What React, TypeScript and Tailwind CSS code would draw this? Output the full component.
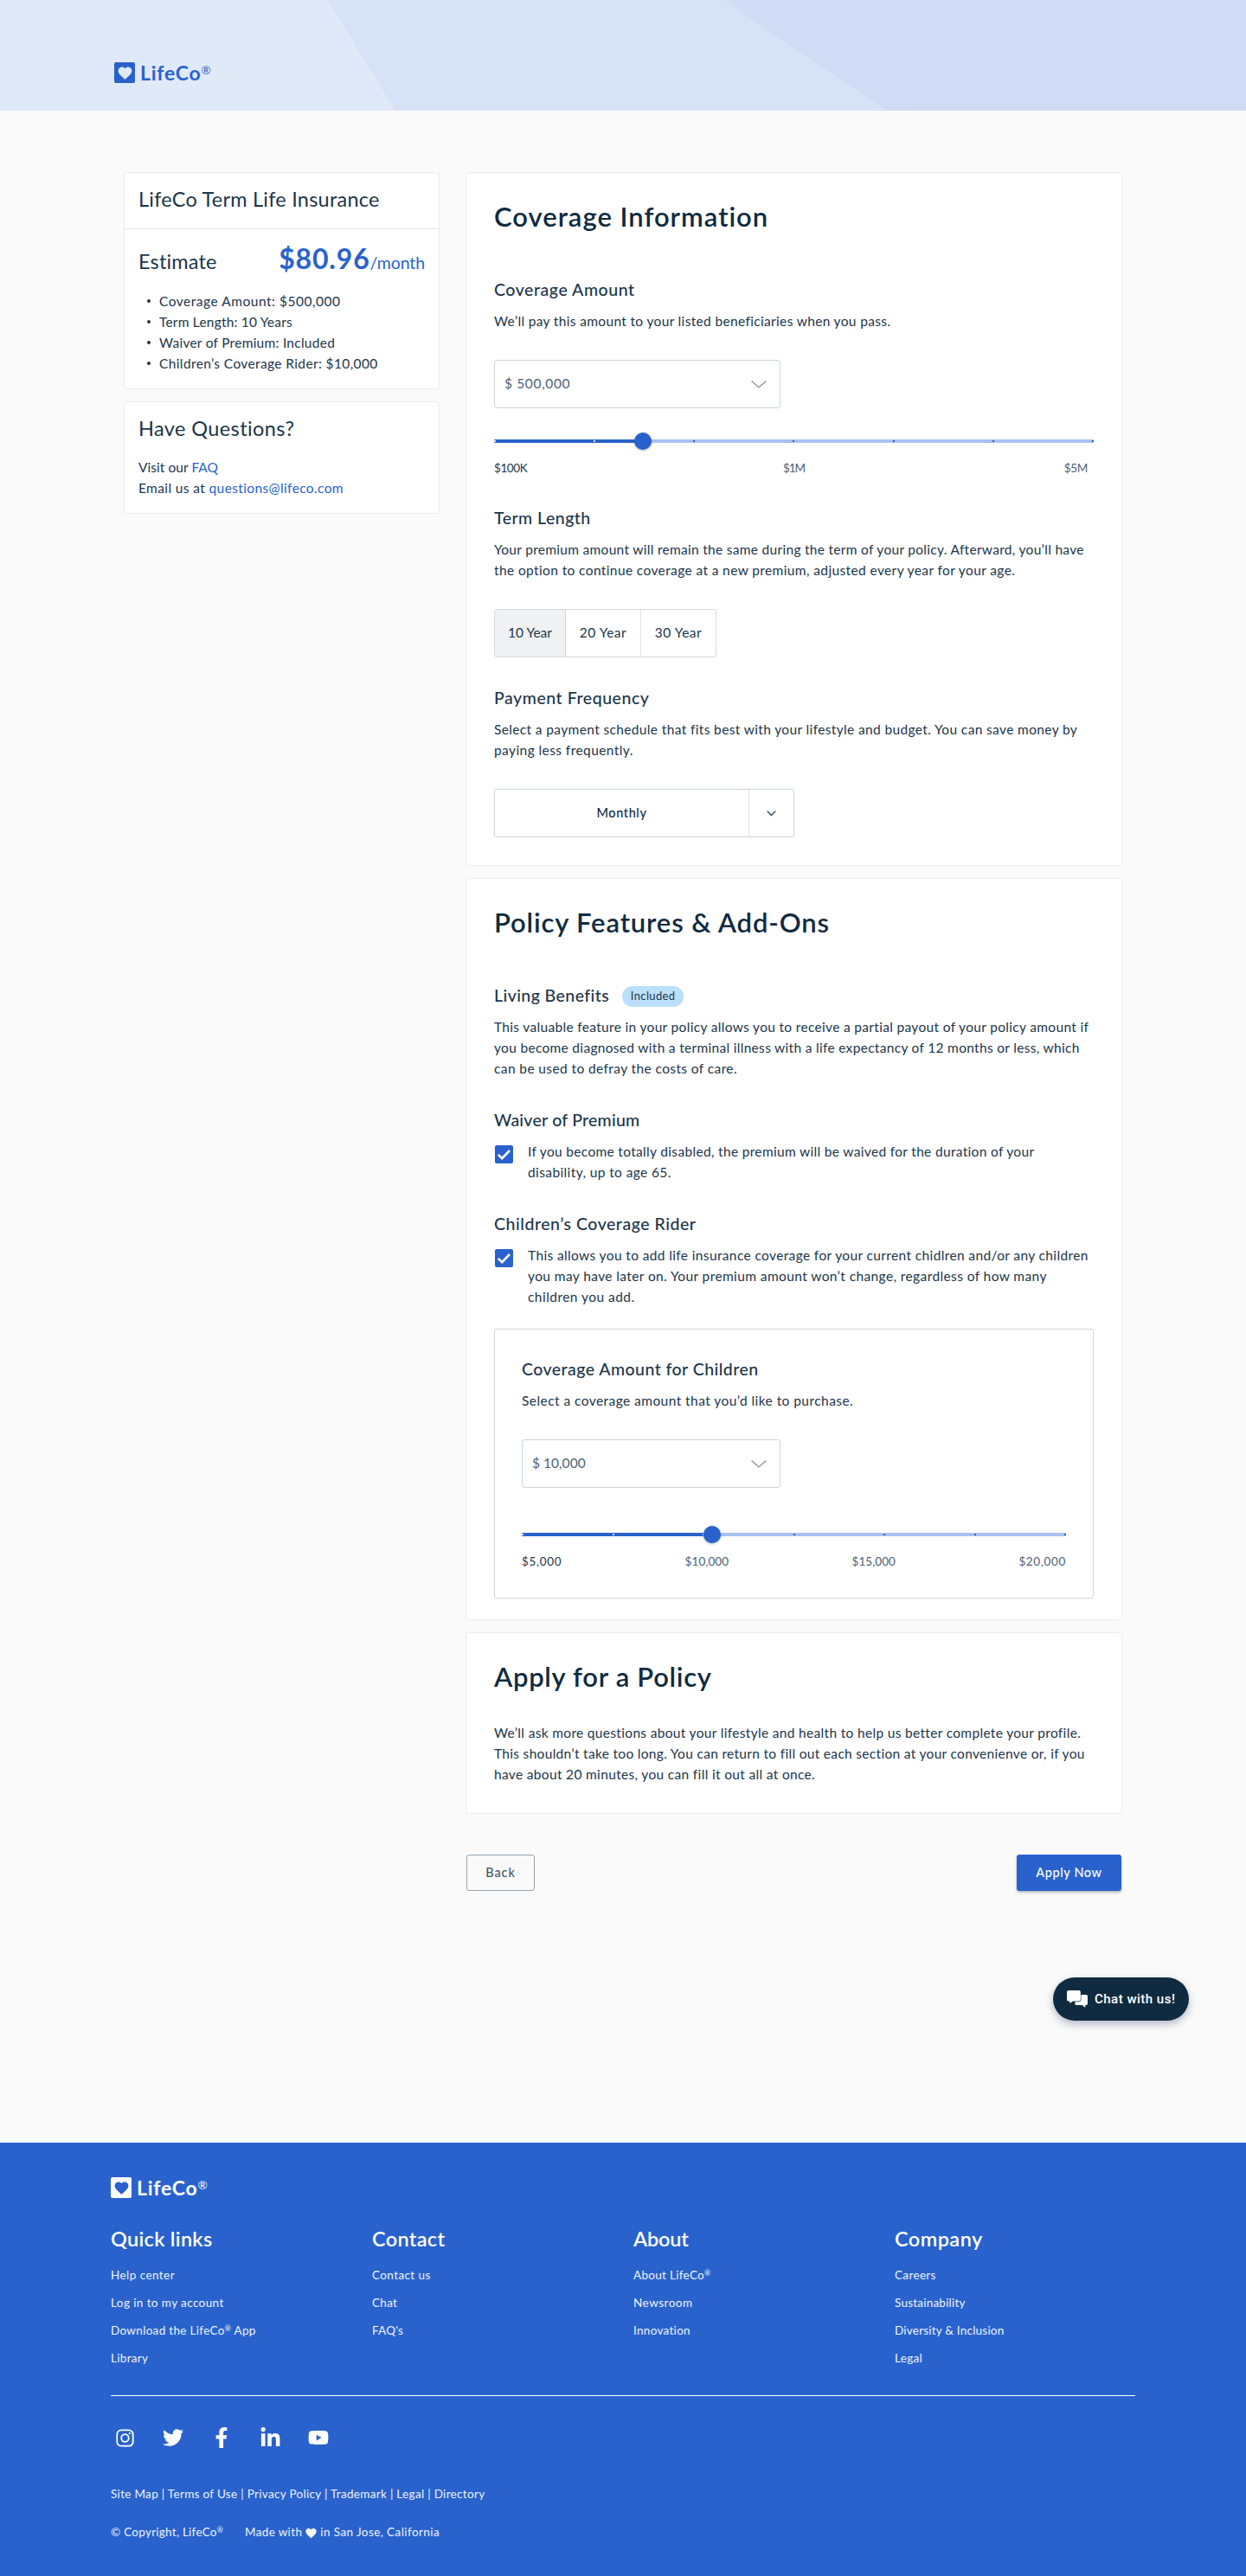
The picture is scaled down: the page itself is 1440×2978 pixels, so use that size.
import React from 'react';
import { MdFavorite } from 'react-icons/md';
import { BiLogoInstagram } from 'react-icons/bi';
import { FaTwitter, FaFacebookF, FaLinkedinIn, FaYoutube } from 'react-icons/fa';

type TextLine = [text: string, tracking: string];

function Logo({ inverted = false }: { inverted?: boolean }) {
  return (
    <div className={`flex h-6 items-center ${inverted ? 'text-white' : 'text-[#2962cc]'}`}>
      <span
        className={`flex size-6 items-center justify-center rounded-[2px] ${
          inverted ? 'bg-white text-[#2962cc]' : 'bg-[#2962cc] text-[#dfe9f7]'
        }`}
      >
        <MdFavorite className="mt-px size-[19px]" />
      </span>
      <span className="ml-[6px] text-[23px] leading-6 font-bold tracking-[0.72px]">LifeCo</span>
      <sup className="top-0 -mt-[7px] text-[13.5px] leading-4 font-normal">®</sup>
    </div>
  );
}

function Card({ className = '', children }: { className?: string; children: React.ReactNode }) {
  return <section className={`rounded-[3px] bg-white shadow-[0_0_0_1px_#ececee] ${className}`}>{children}</section>;
}

function Title({ tracking, children }: { tracking: string; children: React.ReactNode }) {
  return <h2 className={`text-[31px] leading-10 font-semibold text-[#102b3f] ${tracking}`}>{children}</h2>;
}

function Heading({ className, children }: { className: string; children: React.ReactNode }) {
  return <h3 className={`text-[19.5px] leading-8 font-medium ${className}`}>{children}</h3>;
}

function Copy({ lines, className = '' }: { lines: TextLine[]; className?: string }) {
  return (
    <p className={`text-[15.5px] leading-6 ${className}`}>
      {lines.map(([text, tracking]) => (
        <span key={text} className={`block whitespace-nowrap ${tracking}`}>
          {text}
        </span>
      ))}
    </p>
  );
}

function SelectField({ value, className }: { value: string; className: string }) {
  return (
    <div
      className={`mt-[33px] flex h-14 items-center justify-between rounded-[3px] border border-[#cdd4da] pr-[15px] pl-[11px] text-[15.5px] text-[#4c6273] ${className}`}
    >
      <span>{value}</span>
      <svg className="mt-px h-[9px] w-[18px]" viewBox="0 0 18 9" fill="none" stroke="#91a1af" strokeWidth="1.6">
        <path d="M.6 .7 9 7.8 17.4 .7" />
      </svg>
    </div>
  );
}

function Slider({ percent, ticks }: { percent: number; ticks: boolean[] }) {
  return (
    <div className="relative flex h-5 items-center">
      <div className="h-1 w-full rounded-[1px] bg-[#a9c1ee]">
        <div className="h-full rounded-[1px] bg-[#2962cc]" style={{ width: `${percent}%` }} />
      </div>
      <div className="absolute inset-x-0 flex justify-between">
        {ticks.map((filled, i) => (
          <span key={i} className={`h-[2px] w-[2px] ${filled ? 'bg-[#dce7fa]' : 'bg-[#2962cc]'}`} />
        ))}
      </div>
      <span
        className="absolute size-5 -translate-x-1/2 rounded-full bg-[#2962cc] shadow-[0_1px_3px_rgba(16,43,63,0.35)]"
        style={{ left: `${percent}%` }}
      />
    </div>
  );
}

function Checkbox() {
  return (
    <svg className="mt-[4.5px] ml-px size-[21px] shrink-0" viewBox="0 0 21 21">
      <rect width="21" height="21" rx="2" fill="#2962cc" />
      <path d="M3.8 10.8 8.2 15.2 17 6" fill="none" stroke="#fff" strokeWidth="2.6" />
    </svg>
  );
}

function ChatIcon() {
  return (
    <svg className="h-5 w-6" viewBox="0 0 24 20">
      <path d="M11 5h11.2A1.8 1.8 0 0 1 24 6.800v8.400A1.800 1.800 0 0 1 22.200 17H21.300v2.800L17.500 17H11a1.800 1.800 0 0 1-1.800-1.800Z" fill="#fff" />
      <path
        d="M1.800 0h12.200a1.800 1.800 0 0 1 1.800 1.800v9a1.800 1.800 0 0 1-1.800 1.800H7L3.400 15v-2.400H1.800A1.800 1.800 0 0 1 0 10.800v-9A1.800 1.800 0 0 1 1.800 0Z"
        fill="#fff"
        stroke="#102b3f"
        strokeWidth="1.2"
        paintOrder="stroke"
      />
    </svg>
  );
}

const coverageItems: TextLine[] = [
  ['Coverage Amount: $500,000', 'tracking-[0.52px]'],
  ['Term Length: 10 Years', 'tracking-[0.2px]'],
  ['Waiver of Premium: Included', 'tracking-[0.26px]'],
  ['Children’s Coverage Rider: $10,000', 'tracking-[0.38px]'],
];

function Reg() {
  return <span className="relative -top-[4px] text-[8.5px] leading-none">®</span>;
}

const footerColumns: { title: string; tracking: string; links: [React.ReactNode, string][] }[] = [
  {
    title: 'Quick links',
    tracking: 'tracking-[0.28px]',
    links: [
      ['Help center', 'tracking-[0.44px]'],
      ['Log in to my account', 'tracking-[0.41px]'],
      [<>Download the LifeCo<Reg /> App</>, 'tracking-[0.32px]'],
      ['Library', 'tracking-[0.3px]'],
    ],
  },
  {
    title: 'Contact',
    tracking: 'tracking-[0.33px]',
    links: [
      ['Contact us', 'tracking-[0.4px]'],
      ['Chat', 'tracking-[0.3px]'],
      ["FAQ's", 'tracking-[0.2px]'],
    ],
  },
  {
    title: 'About',
    tracking: 'tracking-[-0.2px]',
    links: [
      [<>About LifeCo<Reg /></>, 'tracking-[0.3px]'],
      ['Newsroom', 'tracking-[0.49px]'],
      ['Innovation', 'tracking-[0.3px]'],
    ],
  },
  {
    title: 'Company',
    tracking: 'tracking-[0.45px]',
    links: [
      ['Careers', 'tracking-[0.35px]'],
      ['Sustainability', 'tracking-[0.22px]'],
      ['Diversity & Inclusion', 'tracking-[0.22px]'],
      ['Legal', 'tracking-[0.3px]'],
    ],
  },
];

export default function App() {
  return (
    <div className="relative min-h-[2978px] w-[1440px] bg-[#fafafa] font-['Lato','Liberation_Sans',sans-serif] text-[#1b3549]">
      <header className="relative h-32 bg-[#dfe9f7]">
        <svg className="absolute inset-0 h-32 w-full" viewBox="0 0 1440 128" preserveAspectRatio="none">
          <polygon points="379,0 1440,0 1440,128 457,128" fill="#d7e2f6" />
          <polygon points="837,0 1440,0 1440,128 1025,128" fill="#d0dcf5" />
        </svg>
        <div className="relative pt-[72px] pl-[132px]">
          <Logo />
        </div>
      </header>

      <div className="flex items-start gap-8 pt-[72px] pr-36 pl-36">
        <aside className="flex w-[363px] shrink-0 flex-col gap-4">
          <Card className="h-[249px]">
            <h2 className="h-16 px-4 pt-[14px] text-[23.5px] leading-8 tracking-[0.23px] whitespace-nowrap">
              LifeCo Term Life Insurance
            </h2>
            <div className="border-t border-[#e4e6e8] px-4 pt-[14px]">
              <div className="flex h-10 items-baseline justify-between leading-10">
                <span className="text-[23.5px] tracking-[0.16px]">Estimate</span>
                <span className="text-[#2962cc]">
                  <span className="text-[32px] font-bold tracking-[0.82px]">$80.96</span>
                  <span className="text-[19.5px] tracking-[-0.09px]">/month</span>
                </span>
              </div>
              <ul className="mt-[17px] text-[15.5px] leading-6">
                {coverageItems.map(([text, tracking]) => (
                  <li key={text} className="flex items-center whitespace-nowrap">
                    <span className="ml-[10px] mr-[10px] size-1 rounded-full bg-[#1b3549]" />
                    <span className={tracking}>{text}</span>
                  </li>
                ))}
              </ul>
            </div>
          </Card>
          <Card className="h-32 px-4 pt-[14px]">
            <h2 className="text-[23.5px] leading-8 tracking-[0.4px]">Have Questions?</h2>
            <p className="mt-[17px] text-[15.5px] leading-6 tracking-[0.05px]">
              Visit our <a className="text-[#2962cc]">FAQ</a>
            </p>
            <p className="text-[15.5px] leading-6 tracking-[0.38px]">
              Email us at <a className="text-[#2962cc]">questions@lifeco.com</a>
            </p>
          </Card>
        </aside>

        <main className="flex w-[757px] flex-col gap-4">
          <Card className="h-[800px] px-8 pt-[30px]">
            <Title tracking="tracking-[0.99px]">Coverage Information</Title>

            <Heading className="mt-[49px] tracking-[0.55px]">Coverage Amount</Heading>
            <Copy
              className="mt-2"
              lines={[['We’ll pay this amount to your listed beneficiaries when you pass.', 'tracking-[0.34px]']]}
            />
            <SelectField value="$ 500,000" className="w-[331px] tracking-[0.64px]" />
            <div className="mt-7">
              <Slider percent={24.82} ticks={[true, true, false, false, false, false, false]} />
            </div>
            <div className="mt-[11px] flex justify-between pr-[7px] text-[13.5px] leading-5 text-[#4c6273]">
              <span className="tracking-[-0.4px] text-[#1b3549]">$100K</span>
              <span className="mr-1 tracking-[-1px]">$1M</span>
              <span className="tracking-[-0.34px]">$5M</span>
            </div>

            <Heading className="mt-8 tracking-[0.48px]">Term Length</Heading>
            <Copy
              className="mt-2"
              lines={[
                [
                  'Your premium amount will remain the same during the term of your policy. Afterward, you’ll have',
                  'tracking-[0.295px]',
                ],
                [
                  'the option to continue coverage at a new premium, adjusted every year for your age.',
                  'tracking-[0.384px]',
                ],
              ]}
            />
            <div className="mt-[33px] flex h-14 w-[257px] overflow-hidden rounded-[3px] border border-[#d5dade] text-[15.5px]">
              <button className="w-[82px] border-r border-[#cdd4da] bg-[#f0f1f3]">10 Year</button>
              <button className="w-[87px] border-r border-[#dfe3e6] tracking-[0.52px]">20 Year</button>
              <button className="flex-1 tracking-[0.5px]">30 Year</button>
            </div>

            <Heading className="mt-[31px] tracking-[0.55px]">Payment Frequency</Heading>
            <Copy
              className="mt-2"
              lines={[
                [
                  'Select a payment schedule that fits best with your lifestyle and budget. You can save money by',
                  'tracking-[0.365px]',
                ],
                ['paying less frequently.', 'tracking-[0.42px]'],
              ]}
            />
            <div className="mt-[33px] flex h-14 w-[347px] rounded-[3px] border border-[#cdd4da]">
              <div className="flex w-[294px] items-center justify-center border-r border-[#dde1e5] text-[14.5px] font-medium tracking-[0.6px] text-[#102b3f]">
                Monthly
              </div>
              <div className="flex flex-1 items-center justify-center">
                <svg className="h-[7px] w-[11px]" viewBox="0 0 11 7" fill="none" stroke="#2c4558" strokeWidth="1.3">
                  <path d="M.8 .8 5.500 5.500 10.200 .8" />
                </svg>
              </div>
            </div>
          </Card>

          <Card className="h-[856px] px-8 pt-[30px]">
            <Title tracking="tracking-[0.86px]">Policy Features &amp; Add-Ons</Title>

            <div className="mt-[49px] flex items-start">
              <Heading className="tracking-[0.42px]">Living Benefits</Heading>
              <span className="mt-[5px] ml-[15px] flex h-6 w-[71px] items-center justify-center rounded-full bg-[#bbdffc] text-[13px] tracking-[0.35px]">
                Included
              </span>
            </div>
            <Copy
              className="mt-2"
              lines={[
                [
                  'This valuable feature in your policy allows you to receive a partial payout of your policy amount if',
                  'tracking-[0.325px]',
                ],
                [
                  'you become diagnosed with a terminal illness with a life expectancy of 12 months or less, which',
                  'tracking-[0.307px]',
                ],
                ['can be used to defray the costs of care.', 'tracking-[0.395px]'],
              ]}
            />

            <Heading className="mt-8 tracking-[0.24px]">Waiver of Premium</Heading>
            <div className="mt-2 flex items-start gap-[17px]">
              <Checkbox />
              <Copy
                lines={[
                  [
                    'If you become totally disabled, the premium will be waived for the duration of your',
                    'tracking-[0.325px]',
                  ],
                  ['disability, up to age 65.', 'tracking-[0.39px]'],
                ]}
              />
            </div>

            <Heading className="mt-8 tracking-[0.53px]">Children’s Coverage Rider</Heading>
            <div className="mt-2 flex items-start gap-[17px]">
              <Checkbox />
              <Copy
                lines={[
                  [
                    'This allows you to add life insurance coverage for your current chidlren and/or any children',
                    'tracking-[0.37px]',
                  ],
                  [
                    'you may have later on. Your premium amount won’t change, regardless of how many',
                    'tracking-[0.395px]',
                  ],
                  ['children you add.', 'tracking-[0.46px]'],
                ]}
              />
            </div>

            <div className="mt-[25px] h-[312px] rounded-[3px] border border-[#cdd4da] px-[31px] pt-[30px]">
              <Heading className="tracking-[0.456px]">Coverage Amount for Children</Heading>
              <Copy
                className="mt-2"
                lines={[['Select a coverage amount that you’d like to purchase.', 'tracking-[0.442px]']]}
              />
              <SelectField value="$ 10,000" className="w-[299px] tracking-[0.03px]" />
              <div className="mt-11">
                <Slider percent={34.98} ticks={[true, true, true, false, false, false, false]} />
              </div>
              <div className="mt-[11px] flex justify-between text-[13.5px] leading-5 text-[#4c6273]">
                <span className="tracking-[0.67px] text-[#1b3549]">$5,000</span>
                <span className="tracking-[0.07px]">$10,000</span>
                <span className="tracking-[0.07px]">$15,000</span>
                <span className="tracking-[0.65px]">$20,000</span>
              </div>
            </div>
          </Card>

          <Card className="h-[208px] px-8 pt-[30px]">
            <Title tracking="tracking-[0.7px]">Apply for a Policy</Title>
            <Copy
              className="mt-[33px]"
              lines={[
                [
                  'We’ll ask more questions about your lifestyle and health to help us better complete your profile.',
                  'tracking-[0.325px]',
                ],
                [
                  'This shouldn’t take too long. You can return to fill out each section at your convenienve or, if you',
                  'tracking-[0.31px]',
                ],
                ['have about 20 minutes, you can fill it out all at once.', 'tracking-[0.331px]'],
              ]}
            />
          </Card>

          <div className="mt-8 flex items-center justify-between text-[14.5px] font-medium">
            <button className="h-[42px] w-[79px] rounded-[3px] border border-[#93a4b3] tracking-[0.9px] text-[#43596b]">
              Back
            </button>
            <button className="h-[42px] w-[121px] rounded-[3px] bg-[#2962cc] tracking-[0.6px] text-white shadow-[0_2px_3px_rgba(16,43,63,0.3)]">
              Apply Now
            </button>
          </div>
        </main>
      </div>

      <div className="flex justify-end pt-[100px] pr-[66px]">
        <button className="flex h-[50px] w-[157px] items-center rounded-full bg-[#102b3f] pl-4 text-white shadow-[0_4px_10px_rgba(40,60,100,0.35)]">
          <ChatIcon />
          <span className="ml-2 font-['Roboto',sans-serif] text-[15px] font-medium tracking-[0.49px]">
            Chat with us!
          </span>
        </button>
      </div>

      <footer className="mt-[141px] h-[501px] bg-[#2962cc] px-32 pt-10 text-white">
        <Logo inverted />
        <div className="mt-[31px] flex">
          {footerColumns.map((column) => (
            <nav key={column.title} className="w-[302px] shrink-0">
              <h3 className={`text-[23.5px] leading-8 font-semibold ${column.tracking}`}>{column.title}</h3>
              <ul className="mt-[10px] h-32 text-[13.5px] leading-8 text-[#eff4fc]">
                {column.links.map(([label, tracking], i) => (
                  <li key={i} className={`h-8 ${tracking}`}>
                    {label}
                  </li>
                ))}
              </ul>
            </nav>
          ))}
        </div>
        <hr className="mt-[27px] h-px border-0 bg-white" />
        <div className="mt-9 flex h-6 gap-6">
          <span className="flex w-8 justify-center">
            <BiLogoInstagram className="-mt-[1.5px] size-[27px]" />
          </span>
          <span className="flex w-8 justify-center">
            <FaTwitter className="size-6" />
          </span>
          <span className="flex w-8 justify-center">
            <FaFacebookF className="size-6" />
          </span>
          <span className="flex w-8 justify-center">
            <FaLinkedinIn className="size-[25px]" />
          </span>
          <span className="flex w-8 justify-center">
            <FaYoutube className="size-6" />
          </span>
        </div>
        <p className="mt-[43px] text-[13.5px] leading-5 tracking-[0.315px] text-[#eff4fc]">
          Site Map | Terms of Use | Privacy Policy | Trademark | Legal | Directory
        </p>
        <div className="mt-6 flex items-center text-[13.5px] leading-5 text-[#eff4fc]">
          <span className="w-[155px] tracking-[0.26px]">
            © Copyright, LifeCo
            <Reg />
          </span>
          <span className="tracking-[0.35px]">Made with</span>
          <MdFavorite className="mx-[3px] mt-0.5 size-[15px]" />
          <span className="tracking-[0.42px]">in San Jose, California</span>
        </div>
      </footer>
    </div>
  );
}
